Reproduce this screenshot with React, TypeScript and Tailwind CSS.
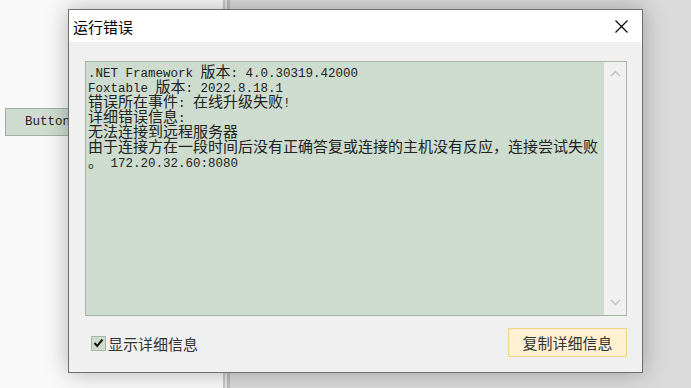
import React from "react";

const lines = [
  ".NET Framework 版本: 4.0.30319.42000",
  "Foxtable 版本: 2022.8.18.1",
  "错误所在事件: 在线升级失败!",
  "详细错误信息:",
  "无法连接到远程服务器",
  "由于连接方在一段时间后没有正确答复或连接的主机没有反应，连接尝试失败",
  "。 172.20.32.60:8080",
];

function runs(s: string) {
  const out: { cjk: boolean; t: string }[] = [];
  for (const ch of s) {
    const cjk = ch.charCodeAt(0) > 0x2000;
    const last = out[out.length - 1];
    if (last && last.cjk === cjk) last.t += ch;
    else out.push({ cjk, t: ch });
  }
  return out;
}

function Line({ s }: { s: string }) {
  return (
    <div className="h-[15px] leading-[15px] whitespace-pre overflow-visible">
      {runs(s).map((r, i) =>
        r.cjk ? (
          <span key={i} className="text-[15px] leading-[15px] font-['Noto_Sans_CJK_SC',sans-serif]">
            {r.t}
          </span>
        ) : (
          <span key={i} className="text-[12.5px] leading-[15px] font-['Liberation_Mono',monospace]">
            {r.t}
          </span>
        )
      )}
    </div>
  );
}

function Chevron({ down }: { down?: boolean }) {
  return (
    <svg width="11" height="7" viewBox="0 0 11 7">
      <path
        d={down ? "M1 1 L5.5 5.5 L10 1" : "M1 6 L5.5 1.5 L10 6"}
        fill="none"
        stroke="#c4c4c4"
        strokeWidth="1.6"
      />
    </svg>
  );
}

export default function App() {
  return (
    <div className="relative w-[691px] h-[388px] overflow-hidden bg-[#dedede] font-['Noto_Sans_CJK_SC',sans-serif]">
      <div className="flex h-full">
        <div className="w-[223px] h-full bg-[#f9f9f9] pt-[108px] pl-[5px]">
          <div className="w-[100px] h-[28px] bg-[#cddccf] border border-[#9fb0a2] flex items-center pl-[19px] text-[12.5px] text-[#222] font-['Liberation_Mono',monospace]">
            Button
          </div>
        </div>
        <div className="w-[2px] h-full bg-[#c6c6c6]" />
        <div className="w-[2px] h-full bg-[#e4e4e4]" />
        <div className="w-[3px] h-full bg-[#bdbdbd]" />
        <div className="flex-1 h-full bg-[#dadada]" />
      </div>

      <div className="absolute left-[68px] top-[9px] w-[575px] h-[364px] border border-[#6e6e6e] bg-[#f0f0f0] shadow-[0_0_22px_rgba(0,0,0,0.28)] flex flex-col">
        <div className="h-[32px] bg-white flex items-center justify-between pl-[4px] pr-[14px]">
          <span className="text-[15px] text-black leading-none">运行错误</span>
          <svg width="13" height="13" viewBox="0 0 13 13">
            <path d="M0.5 0.5 L12.5 12.5 M12.5 0.5 L0.5 12.5" stroke="#000" strokeWidth="1.1" />
          </svg>
        </div>
        <div className="flex-1 flex flex-col pt-[19px] pl-[16px]">
          <div className="w-[542px] h-[255px] border border-[#a5b6a7] bg-[#cddccf] flex">
            <div className="flex-1 pl-[2px] pt-[1px] text-[#222]">
              {lines.map((l, i) => (
                <Line key={i} s={l} />
              ))}
            </div>
            <div className="w-[22px] h-full bg-[#f0f0f0] flex flex-col items-center justify-between pt-[8px] pb-[9px]">
              <Chevron />
              <Chevron down />
            </div>
          </div>
          <div className="flex items-center justify-between w-[542px] mt-[12px]">
            <div className="flex items-center ml-[6px] mt-[1px]">
              <div className="w-[15px] h-[15px] bg-[#cddccf] border border-[#a5b6a7] flex items-center justify-center">
                <svg width="11" height="10" viewBox="0 0 11 10">
                  <path d="M1.5 5 L4.2 8 L9.5 1.5" fill="none" stroke="#1a1a1a" strokeWidth="2" />
                </svg>
              </div>
              <span className="ml-[2px] text-[15px] text-[#333] leading-none">显示详细信息</span>
            </div>
            <div className="w-[119px] h-[29px] bg-[#fff1d2] border border-[#f0d48a] flex items-center justify-center text-[15px] text-[#333] leading-none">
              复制详细信息
            </div>
          </div>
        </div>
      </div>
    </div>
  );
}
